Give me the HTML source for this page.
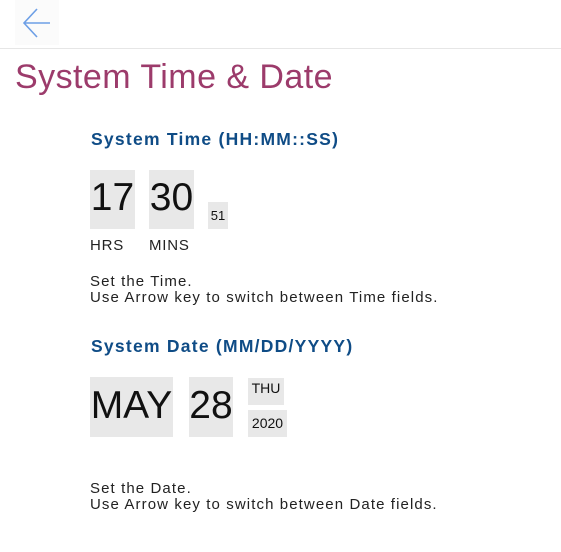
<!DOCTYPE html>
<html><head><style>
body{margin:0;width:561px;height:552px;background:#fff;font-family:"Liberation Sans",Arial,sans-serif;position:relative;overflow:hidden;color:#222}
.a{position:absolute}
.box{position:absolute;background:#e8e8e8;color:#111;text-align:center}
.h{position:absolute;left:91px;font-weight:bold;font-size:17.5px;letter-spacing:1.25px;color:#0f4c86}
.t{position:absolute;left:90px;font-size:15px;letter-spacing:1.1px;line-height:16px;color:#222}
</style></head><body>
<div class="a" style="left:15px;top:0;width:44px;height:45px;background:#fbfbfb"></div>
<svg class="a" style="left:22px;top:3px" width="32" height="40" viewBox="0 0 32 40"><path d="M28 20H3M15 6L2 20L15 34" fill="none" stroke="#6d9fe6" stroke-width="1.6"/></svg>
<div class="a" style="left:0;top:48px;width:561px;height:1px;background:#e6e6e6"></div>
<div class="a" style="left:15px;top:58px;font-size:34px;letter-spacing:0.45px;color:#9c3b6b">System Time &amp; Date</div>
<div class="h" style="top:129px">System Time (HH:MM::SS)</div>
<div class="box" style="left:90px;top:170px;width:45px;height:59px;font-size:39px;line-height:56px">17</div>
<div class="box" style="left:149px;top:170px;width:45px;height:59px;font-size:39px;line-height:56px">30</div>
<div class="box" style="left:208px;top:202px;width:20px;height:27px;font-size:13px;line-height:27px">51</div>
<div class="a" style="left:90px;top:237px;font-size:15px;letter-spacing:0.8px">HRS</div>
<div class="a" style="left:149px;top:237px;font-size:15px;letter-spacing:0.8px">MINS</div>
<div class="t" style="top:274px">Set the Time.<br>Use Arrow key to switch between Time fields.</div>
<div class="h" style="top:336px">System Date (MM/DD/YYYY)</div>
<div class="box" style="left:90px;top:377px;width:83px;height:60px;font-size:39px;line-height:58px">MAY</div>
<div class="box" style="left:189px;top:377px;width:44px;height:60px;font-size:39px;line-height:58px">28</div>
<div class="box" style="left:248px;top:378px;width:36px;height:27px;font-size:14px;line-height:20px">THU</div>
<div class="box" style="left:248px;top:410px;width:39px;height:27px;font-size:14px;line-height:27px">2020</div>
<div class="t" style="top:481px">Set the Date.<br>Use Arrow key to switch between Date fields.</div>
</body></html>
